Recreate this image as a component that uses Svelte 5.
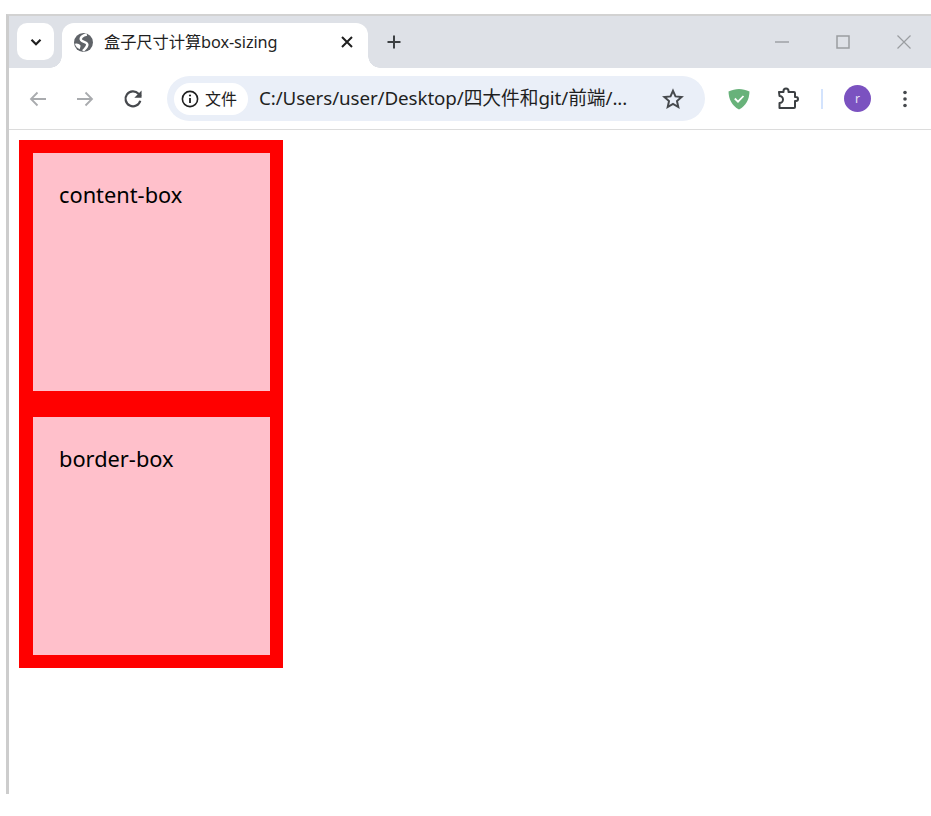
<script>
  const boxes = ["content-box", "border-box"];
</script>

<div class="window">
  <div class="strip">
    <button class="tabsearch" aria-label="search tabs">
      <svg width="14" height="14" viewBox="0 0 14 14"><path d="M2.500 4.800 7 9.200l4.500-4.400" fill="none" stroke="#1f1f1f" stroke-width="2.200"/></svg>
    </button>
    <div class="tab">
      <svg class="globe" width="19" height="19" viewBox="0 0 20 20">
        <circle cx="10" cy="10" r="10" fill="#5f6368"/>
        <path d="M13.500 1.500C9 2.500 6 5 7.500 7.500c1.500 2.200 6 1.500 6.500 4.500.4 2.500-2.500 4.500-4.500 7" fill="none" stroke="#fff" stroke-width="2.600"/>
        <path d="M1 11.500c2-.8 4.500-.2 6 2l-1 3.500C3.500 16 1.800 14 1 11.500z" fill="#fff"/>
      </svg>
      <span class="title">盒子尺寸计算box-sizing</span>
      <svg class="tabclose" width="14" height="14" viewBox="0 0 14 14"><path d="M2 2l10 10M12 2 2 12" stroke="#1f1f1f" stroke-width="2"/></svg>
    </div>
    <svg class="plus" width="16" height="16" viewBox="0 0 16 16"><path d="M8 1.500v13M1.500 8h13" stroke="#3c4043" stroke-width="2"/></svg>
    <div class="controls">
      <svg width="16" height="16" viewBox="0 0 16 16"><path d="M1 8h14" stroke="#9a9da1" stroke-width="1.400"/></svg>
      <svg width="16" height="16" viewBox="0 0 16 16"><rect x="2" y="2" width="12" height="12" fill="none" stroke="#9a9da1" stroke-width="1.500"/></svg>
      <svg width="16" height="16" viewBox="0 0 16 16"><path d="M1.500 1.500l13 13M14.500 1.500l-13 13" stroke="#9a9da1" stroke-width="1.200"/></svg>
    </div>
  </div>

  <div class="toolbar">
    <svg class="nav" width="20" height="20" viewBox="0 0 20 20"><path d="M18 10H3M9.500 3.500 3 10l6.500 6.500" fill="none" stroke="#a9abae" stroke-width="1.800"/></svg>
    <svg class="nav" width="20" height="20" viewBox="0 0 20 20"><path d="M2 10h15M10.500 3.500 17 10l-6.500 6.500" fill="none" stroke="#a9abae" stroke-width="1.800"/></svg>
    <svg class="reload" width="22" height="22" viewBox="0 0 20 20"><path d="M16.600 11.500a6.800 6.800 0 1 1-1.600-6.300L17 7.500" fill="none" stroke="#46494d" stroke-width="2"/><path d="M17.800 2.200v6.600h-6.600z" fill="#46494d"/></svg>
    <div class="omnibox">
      <div class="chip">
        <svg width="18" height="18" viewBox="0 0 18 18"><circle cx="9" cy="9" r="7.600" fill="none" stroke="#1f1f1f" stroke-width="1.600"/><path d="M9 8v5" stroke="#1f1f1f" stroke-width="1.800"/><circle cx="9" cy="5.500" r="1.100" fill="#1f1f1f"/></svg>
        <span>文件</span>
      </div>
      <span class="url">C:/Users/user/Desktop/四大件和git/前端/...</span>
      <svg class="star" width="22" height="22" viewBox="0 0 22 22"><path d="M11 2.800l2.500 5.600 6.100.6-4.600 4.100 1.300 6-5.300-3.100-5.300 3.100 1.300-6-4.600-4.100 6.100-.6z" fill="none" stroke="#46494d" stroke-width="2"/></svg>
    </div>
    <svg class="shield" width="22" height="22" viewBox="0 0 22 22">
      <path d="M11 1C7.500 1 4 2 .5 3.500.8 11 3.500 17.500 11 21.500 18.500 17.500 21.200 11 21.500 3.500 18 2 14.500 1 11 1z" fill="#68b27a"/>
      <path d="M6.800 10.500l3.200 3.200 5.500-5.700" fill="none" stroke="#fff" stroke-width="1.800"/>
    </svg>
    <svg class="puzzle" width="24" height="24" viewBox="0 0 24 24"><path d="M3 5H7.500V4a2.500 2.500 0 0 1 5 0V5H18a1 1 0 0 1 1 1V10h1a2 2 0 0 1 0 4h-1V20a1 1 0 0 1-1 1H3.500V16a3.500 3.500 0 0 0 0-7z" fill="none" stroke="#3c4043" stroke-width="2" stroke-linejoin="round"/></svg>
    <i class="divider"></i>
    <div class="avatar">r</div>
    <svg class="menu" width="6" height="20" viewBox="0 0 6 20"><circle cx="3" cy="3.500" r="1.800" fill="#46494d"/><circle cx="3" cy="10" r="1.800" fill="#46494d"/><circle cx="3" cy="16.500" r="1.800" fill="#46494d"/></svg>
  </div>

  <main class="content">
    {#each boxes as name}
      <div class="box">{name}</div>
    {/each}
  </main>
</div>

<style>
  :global(body) { margin: 0; background: #fff; }
  .window {
    margin: 14px 0 0 6px; height: 780px; box-sizing: border-box;
    border-left: 3px solid #cdcdcd; border-top: 2px solid #d2d2d2;
    display: flex; flex-direction: column; overflow: hidden;
    font-family: "Noto Sans", "Noto Sans CJK SC", sans-serif; color: #1f1f1f;
  }
  .strip { height: 52px; flex: none; box-sizing: border-box; padding: 7px 0 0 8px; background: #dee1e7; display: flex; align-items: flex-start; }
  .tabsearch { width: 37px; height: 37px; padding: 0; border: 0; border-radius: 10px; background: #fff; display: flex; align-items: center; justify-content: center; }
  .tab { position: relative; margin-left: 8px; width: 306px; height: 45px; background: #fff; border-radius: 12px 12px 0 0; display: flex; align-items: center; box-sizing: border-box; padding: 0 14px 7px 12px; }
  .tab::before, .tab::after { content: ""; position: absolute; bottom: 0; width: 12px; height: 12px; }
  .tab::before { left: -12px; background: radial-gradient(circle at 0 0, transparent 11.500px, #fff 12px); }
  .tab::after { right: -12px; background: radial-gradient(circle at 100% 0, transparent 11.500px, #fff 12px); }
  .title { margin: -2px 0 0 11px; font-size: 16.300px; flex: 1; white-space: nowrap; letter-spacing: -0.1px; }
  .plus { margin: 11px 0 0 18px; }
  .controls { margin: 11px 0 0 auto; display: flex; gap: 45px; padding-right: 19px; }

  .toolbar { position: relative; height: 62px; flex: none; box-sizing: border-box; background: #fff; border-bottom: 1px solid #dcdcdc; border-radius: 12px 12px 0 0; display: flex; align-items: center; padding-left: 19px; }
  .nav { margin-right: 27px; }
  .reload { margin-right: 23px; }
  .omnibox { width: 538px; height: 45px; flex: none; box-sizing: border-box; border-radius: 23px; background: #eaeff8; display: flex; align-items: center; padding: 0 21px 0 7px; }
  .chip { width: 74px; height: 32px; flex: none; box-sizing: border-box; padding-left: 7px; border-radius: 16px; background: #fff; display: flex; align-items: center; gap: 6px; font-size: 16px; }
  .chip span { margin-top: -2px; }
  .url { margin: -3px 0 0 11px; font-size: 18.800px; white-space: nowrap; flex: 1; letter-spacing: -0.1px; }
  .shield { margin-left: 23px; }
  .puzzle { margin-left: 26px; }
  .divider { width: 2px; height: 20px; margin-left: 21px; background: #d3e3fd; }
  .avatar { width: 27px; height: 27px; margin-left: 21px; border-radius: 50%; background: #7b52c0; color: #e8e0f5; font-size: 12px; display: flex; align-items: center; justify-content: center; }
  .menu { margin-left: 31px; }

  .content { flex: 1; padding: 10px 0 0 10px; }
  .box {
    width: 264px; height: 264px; box-sizing: border-box;
    border: 13px solid #f00; border-left-width: 14px; background: #ffc0cb; padding: 27px 26px;
    font-size: 21.800px; line-height: 30px; color: #000;
  }
</style>
